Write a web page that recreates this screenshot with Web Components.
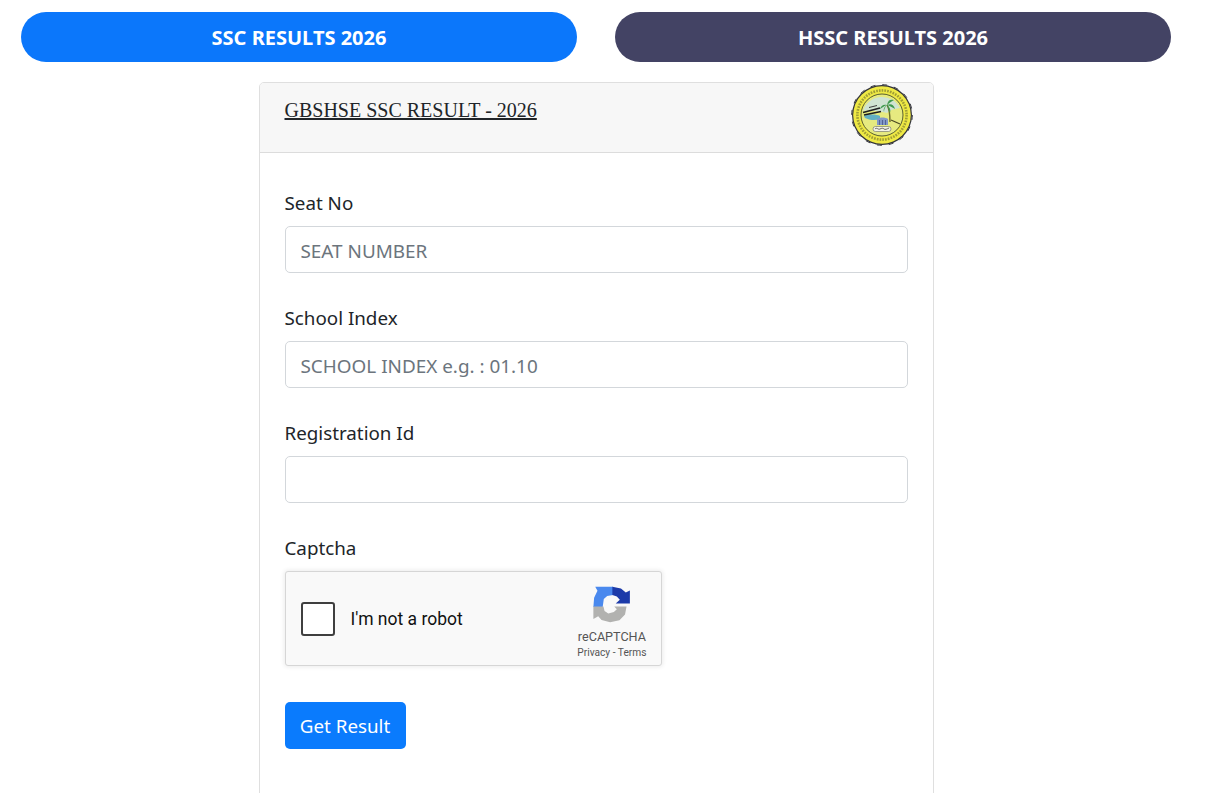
<!DOCTYPE html>
<html lang="en">
<head>
<meta charset="utf-8">
<title>GBSHSE SSC Result 2026</title>
<style>
    html, body { margin: 0; height: 793px; overflow: hidden; background: #fff; }
    body { font-family: "Noto Sans", sans-serif; color: #212529; }
    .page { padding: 12px 36px 0 21px; }
    .card-wrap { margin-top: 20px; }
</style>
</head>
<body>
<div class="page">
    <result-tabs>
        <result-tab>SSC RESULTS 2026</result-tab>
        <result-tab tone="dark">HSSC RESULTS 2026</result-tab>
    </result-tabs>
    <div class="card-wrap">
        <result-card heading="GBSHSE SSC RESULT - 2026">
            <board-seal slot="seal"></board-seal>
            <form-field label="Seat No" placeholder="SEAT NUMBER"></form-field>
            <form-field label="School Index" placeholder="SCHOOL INDEX e.g. : 01.10"></form-field>
            <form-field label="Registration Id"></form-field>
            <form-field label="Captcha"><captcha-box></captcha-box></form-field>
            <submit-button>Get Result</submit-button>
        </result-card>
    </div>
</div>
<script>
class ResultTabs extends HTMLElement {
    constructor() {
        super();
        this.attachShadow({mode: 'open'});
        this.shadowRoot.innerHTML = `
            <style>
                :host { display: grid; grid-template-columns: 1fr 1fr; column-gap: 38px; }
            </style>
            <slot></slot>
        `;
    }
}
class ResultTab extends HTMLElement {
    constructor() {
        super();
        this.attachShadow({mode: 'open'});
        this.shadowRoot.innerHTML = `
            <style>
                :host {
                    display: flex;
                    align-items: center;
                    justify-content: center;
                    height: 50px;
                    border-radius: 25px;
                    background: #0b77fb;
                    color: #fff;
                    font: 700 20px "Noto Sans", sans-serif;
                }
                :host([tone="dark"]) { background: #434364; }
            </style>
            <slot></slot>
        `;
    }
}
class ResultCard extends HTMLElement {
    constructor() {
        super();
        this.attachShadow({mode: 'open'});
        this.shadowRoot.innerHTML = `
            <style>
                :host {
                    display: block;
                    box-sizing: border-box;
                    width: 675px;
                    height: 760px;
                    margin: 0 auto;
                    background: #fff;
                    border: 1px solid #dfdfdf;
                    border-radius: 5px;
                }
                header {
                    display: flex;
                    justify-content: space-between;
                    box-sizing: border-box;
                    height: 70px;
                    padding: 0 19px 0 25px;
                    background: #f7f7f7;
                    border-bottom: 1px solid #dcdcdc;
                    border-radius: 4px 4px 0 0;
                }
                h1 {
                    margin: 14px 0 0;
                    font: 400 20px/26px "Liberation Serif", serif;
                    color: #212529;
                    text-decoration: underline;
                }
                .body { padding: 35px 25px 0; }
            </style>
            <header>
                <h1></h1>
                <slot name="seal"></slot>
            </header>
            <div class="body"><slot></slot></div>
        `;
        this.shadowRoot.querySelector('h1').textContent = this.getAttribute('heading');
    }
}
class BoardSeal extends HTMLElement {
    constructor() {
        super();
        this.attachShadow({mode: 'open'});
        this.shadowRoot.innerHTML = `
            <style>
                :host { display: block; width: 64px; height: 64px; }
                svg { display: block; }
            </style>
            <svg width="64" height="64" viewBox="0 0 64 64">
                <circle cx="32" cy="32" r="30" fill="#33343a"/>
                <circle cx="32" cy="32" r="30.300" fill="none" stroke="#33343a" stroke-width="1" stroke-dasharray="5 6.900"/>
                <circle cx="32" cy="32" r="28.800" fill="#efe944"/>
                <circle cx="32" cy="32" r="24.600" fill="none" stroke="#77762e" stroke-width="2.600" stroke-dasharray="1.700 1.100" opacity=".65"/>
                <circle cx="32" cy="32" r="21" fill="#e6ea80" stroke="#4a4f2a" stroke-width=".9"/>
                <path d="M13 28a20 20 0 0 1 37-3c-6 1-10 2-13 5-8-2-16-3-24-2z" fill="#cfe3d2"/>
                <path d="M14 33c5-2 12-2 16 0v3c-5 2-11 1-15-1z" fill="#62b0c4"/>
                <path d="M27 36c3-2 8-2 11 0v6H27z" fill="#8297c8"/>
                <path d="M29.500 37v5M32.500 37v5M35.500 37v5" stroke="#46548a" stroke-width=".8"/>
                <path d="M13 29.500l17-4.500M14 32l17-3.500" stroke="#1d1e20" stroke-width="1.600"/>
                <path d="M19 24.500l8-2" stroke="#3a3a3a" stroke-width="1"/>
                <path d="M40 39c0-7 0-12-3-17" fill="none" stroke="#6b6a2c" stroke-width="1.400"/>
                <path d="M37 22c-4-1-6 1-7 4 3-2 4-3 7-4zM37 22c1-5 3-6 7-5-3 2-5 3-7 5zM37 22c4-2 7 0 8 4-3-2-5-3-8-4zM37 22c3 2 4 5 3 8-1-3-2-5-3-8zM37 22c-3 2-4 4-3 7 0-3 1-5 3-7z" fill="#3f9a4e"/>
                <path d="M41 37l9 4" stroke="#4b4a22" stroke-width="1.200"/>
                <rect x="23" y="43.500" width="18" height="5" rx="2.500" fill="#f4f3e6" stroke="#666" stroke-width=".6"/>
                <path d="M25 46c2-2 3 1 5 0s3-1 4 0 3 0 5-1" fill="none" stroke="#444" stroke-width=".8"/>
            </svg>
        `;
    }
}
class FormField extends HTMLElement {
    constructor() {
        super();
        this.attachShadow({mode: 'open'});
        const custom = this.children.length > 0;
        this.shadowRoot.innerHTML = `
            <style>
                :host { display: block; margin-bottom: 30px; }
                label {
                    display: block;
                    margin-bottom: 8px;
                    font: 400 18.8px/30px "Noto Sans", sans-serif;
                    color: #212529;
                }
                input {
                    display: block;
                    box-sizing: border-box;
                    width: 100%;
                    height: 47px;
                    padding: 2px 15px 0;
                    background: #fff;
                    border: 1px solid #d3d7db;
                    border-radius: 5px;
                    font: 400 18.9px "Noto Sans", sans-serif;
                    color: #495057;
                    outline: none;
                }
                input::placeholder { color: #6c757d; opacity: 1; }
            </style>
            <label></label>
            ${custom ? '<slot></slot>' : '<input type="text">'}
        `;
        this.shadowRoot.querySelector('label').textContent = this.getAttribute('label');
        const input = this.shadowRoot.querySelector('input');
        if (input && this.hasAttribute('placeholder')) input.placeholder = this.getAttribute('placeholder');
    }
}
class CaptchaBox extends HTMLElement {
    constructor() {
        super();
        this.attachShadow({mode: 'open'});
        this.shadowRoot.innerHTML = `
            <style>
                :host {
                    display: flex;
                    align-items: center;
                    box-sizing: border-box;
                    width: 377px;
                    height: 95px;
                    padding: 0 14px 0 15px;
                    background: #f9f9f9;
                    border: 1px solid #d6d6d6;
                    border-radius: 3px;
                    box-shadow: 0 0 4px 1px rgba(0,0,0,.08);
                    font-family: Roboto, sans-serif;
                }
                .check {
                    box-sizing: border-box;
                    width: 34px;
                    height: 34px;
                    background: #fff;
                    border: 2px solid #3f3f3f;
                    border-radius: 3px;
                }
                .text { margin-left: 16px; flex: 1; font-size: 17.5px; color: #111; }
                .brand {
                    display: flex;
                    flex-direction: column;
                    align-items: center;
                    align-self: flex-start;
                    padding-top: 14px;
                    color: #555;
                }
                svg { display: block; }
                .name { margin-top: 6px; font-size: 12.6px; line-height: 16px; }
                .links { margin-top: 1px; font-size: 10.2px; line-height: 14px; white-space: pre; }
            </style>
            <div class="check"></div>
            <div class="text">I'm not a robot</div>
            <div class="brand">
                <svg width="38" height="37" viewBox="24 12 102 108" preserveAspectRatio="none">
                    <path fill="#4a89ee" d="M25 73 27 46 36 26 30 14H78V38L62 41 53 50 50 73z"/>
                    <path fill="#1c3aa9" d="M76 14 99 19 112 31 123 25V63H85L96 52 88 43 76 38z"/>
                    <path fill="#b2b2b0" d="M25 72H52L55 85 65 92 80 88 88 80 81 72H114L110 95 95 112 70 118 47 111 38 100 25 108z"/>
                </svg>
                <div class="name">reCAPTCHA</div>
                <div class="links">Privacy - Terms</div>
            </div>
        `;
    }
}
class SubmitButton extends HTMLElement {
    constructor() {
        super();
        this.attachShadow({mode: 'open'});
        this.shadowRoot.innerHTML = `
            <style>
                :host {
                    display: inline-flex;
                    align-items: center;
                    justify-content: center;
                    box-sizing: border-box;
                    width: 121px;
                    height: 47px;
                    margin-top: 6px;
                    background: #0a7bfd;
                    border-radius: 5px;
                    color: #fff;
                    font: 400 18.8px "Noto Sans", sans-serif;
                }
            </style>
            <slot></slot>
        `;
    }
}
customElements.define("result-tabs", ResultTabs);
customElements.define("result-tab", ResultTab);
customElements.define("result-card", ResultCard);
customElements.define("board-seal", BoardSeal);
customElements.define("form-field", FormField);
customElements.define("captcha-box", CaptchaBox);
customElements.define("submit-button", SubmitButton);
</script>
</body>
</html>
